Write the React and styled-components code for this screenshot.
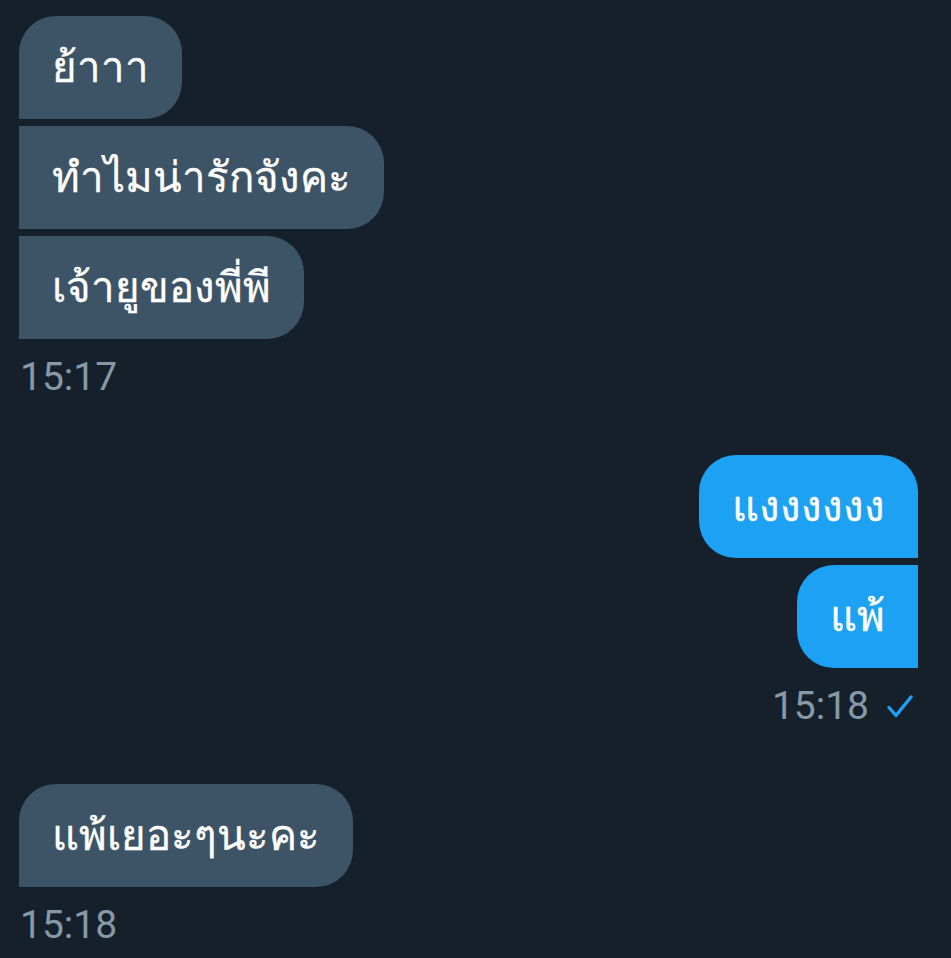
import styled, { createGlobalStyle } from 'styled-components'

const GlobalStyle = createGlobalStyle`
  html, body {
    margin: 0;
    padding: 0;
    background: #15202b;
  }
  body {
    font-family: Roboto, "Noto Sans", "Liberation Sans", sans-serif;
  }
`

const messages = [
  {
    id: 1,
    mine: false,
    texts: ['ย้าาา', 'ทำไมน่ารักจังคะ', 'เจ้ายูของพี่พี'],
    time: '15:17'
  },
  {
    id: 2,
    mine: true,
    texts: ['แงงงงงง', 'แพ้'],
    time: '15:18',
    seen: true
  },
  {
    id: 3,
    mine: false,
    texts: ['แพ้เยอะๆนะคะ'],
    time: '15:18'
  }
]

const radius = (mine, first) => {
  const r = '37px'
  if (mine) {
    return `${r} ${first ? r : '0'} 0 ${r}`
  }
  return `${first ? r : '0'} ${r} ${r} 0`
}

export default function App () {
  return (
    <Page>
      <GlobalStyle />
      {messages.map((group) => (
        <Group key={group.id} $mine={group.mine}>
          {group.texts.map((text, i) => (
            <Bubble
              key={i}
              $mine={group.mine}
              $radius={radius(group.mine, i === 0)}
            >
              {text}
            </Bubble>
          ))}
          <Meta>
            <Time>{group.time}</Time>
            {group.seen && (
              <Check viewBox="0 0 26 24" aria-hidden="true">
                <path d="M2 12.5 L9 20.5 L24 2" />
              </Check>
            )}
          </Meta>
        </Group>
      ))}
    </Page>
  )
}

const Page = styled.div`
  width: 951px;
  min-height: 958px;
  box-sizing: border-box;
  padding: 16px 33px 0 19px;
  display: flex;
  flex-direction: column;
  gap: 55px;
  background: #15202b;
`

const Group = styled.div`
  display: flex;
  flex-direction: column;
  align-items: ${({ $mine }) => ($mine ? 'flex-end' : 'flex-start')};
  gap: 7px;
`

const Bubble = styled.div`
  box-sizing: border-box;
  height: 103px;
  padding: 0 33px;
  display: flex;
  align-items: center;
  font-size: 42px;
  line-height: 55px;
  color: #ffffff;
  -webkit-text-stroke: 0.3px #ffffff;
  background: ${({ $mine }) => ($mine ? '#1da1f2' : '#3d5466')};
  border-radius: ${({ $radius }) => $radius};
  white-space: nowrap;
`

const Meta = styled.div`
  display: flex;
  align-items: center;
  gap: 18px;
  margin-top: 9px;
  padding-left: 1px;
`

const Time = styled.span`
  font-family: Roboto, "Liberation Sans", sans-serif;
  font-size: 39px;
  line-height: 45px;
  color: #8899a6;
`

const Check = styled.svg`
  width: 26px;
  height: 24px;
  margin-right: 5px;
  fill: none;
  stroke: #1da1f2;
  stroke-width: 3.4;
  stroke-linecap: round;
  stroke-linejoin: round;
`
